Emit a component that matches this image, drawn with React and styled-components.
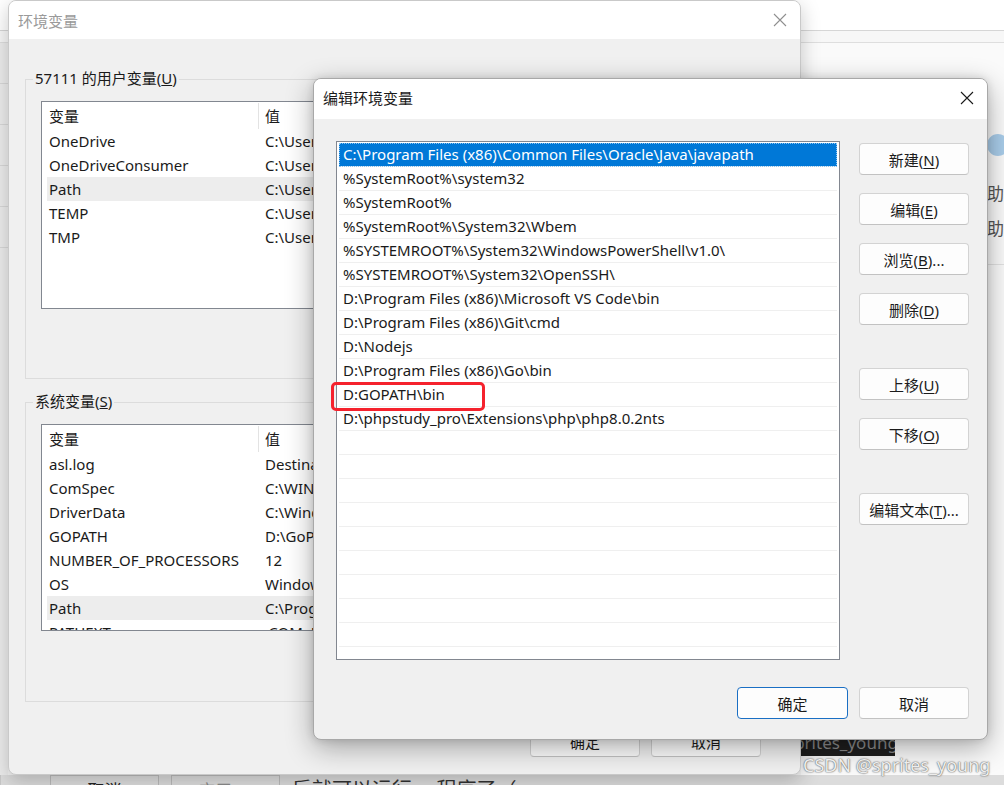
import React from "react";
import styled, { createGlobalStyle } from "styled-components";

const GlobalStyle = createGlobalStyle`
  body {
    margin: 0;
    background: #ededed;
    font-family: "Noto Sans", "Noto Sans CJK SC", sans-serif;
    color: #1a1a1a;
  }
`;

const Desktop = styled.div`
  position: relative;
  width: 1004px;
  height: 785px;
  overflow: hidden;
  background: #f2f2f2;
  display: flex;
  flex-direction: column;
`;

/* ---- page behind the dialogs ---- */

const PageTop = styled.div`
  height: 30px;
  background: #fff;
  border-bottom: 1px solid #d6d6d6;
`;

const PageSub = styled.div`
  height: 11px;
  background: #f7f7f7;
  border-bottom: 1px solid #dedede;
`;

const PageMiddle = styled.div`
  flex: 1;
  display: flex;
`;

const LeftStrip = styled.div`
  width: 8px;
  background: #ececec;
  display: flex;
  flex-direction: column;
  div {
    height: 40px;
    border-bottom: 1px solid #d8d8d8;
  }
`;

const Spacer = styled.div`
  flex: 1;
`;

const RightArea = styled.div`
  width: 203px;
  display: flex;
  flex-direction: column;
  background: #fafafa;
`;

const SideInfo = styled.div`
  padding: 91px 0 24px 186px;
  display: flex;
  flex-direction: column;
  gap: 10px;
  font-size: 17px;
  color: #555;
  border-bottom: 1px solid #e2e2e2;
`;

const SideIcon = styled.div`
  width: 22px;
  height: 22px;
  border-radius: 50%;
  background: #a9cdea;
  margin-bottom: 14px;
`;

const DarkTag = styled.div`
  margin-top: auto;
  margin-bottom: 19px;
  width: 94px;
  height: 16px;
  background: #1e1e1e;
  color: #8a8a8a;
  font-size: 17px;
  line-height: 6px;
  overflow: hidden;
  white-space: nowrap;
  text-indent: -15px;
`;

const PageBottom = styled.div`
  height: 10px;
  display: flex;
  align-items: flex-start;
  padding-left: 49px;
  gap: 12px;
  background: #dcdcdc;
  border-left: 1px solid #c8c8c8;
`;

const PageButton = styled.div`
  width: 109px;
  height: 30px;
  box-sizing: border-box;
  border: 1px solid #bcbcbc;
  background: #dedede;
  text-align: center;
  font-size: 17px;
  line-height: 30px;
  color: ${p => (p.$muted ? "#8c8c8c" : "#222")};
`;

const PageText = styled.div`
  font-size: 20px;
  line-height: 30px;
  color: #333;
  white-space: nowrap;
`;

/* ---- windows ---- */

const Window = styled.section`
  position: absolute;
  left: ${p => p.$x}px;
  top: ${p => p.$y}px;
  width: ${p => p.$w}px;
  height: ${p => p.$h}px;
  box-sizing: border-box;
  display: flex;
  flex-direction: column;
  background: #f0f0f0;
  border: 1px solid ${p => (p.$active ? "#a8a8a8" : "#c9c9c9")};
  border-radius: 8px;
  box-shadow: ${p =>
    p.$active
      ? "0 8px 28px rgba(0,0,0,0.32), 0 0 8px rgba(0,0,0,0.12)"
      : "0 6px 20px rgba(0,0,0,0.22)"};
  overflow: hidden;
`;

const TitleBar = styled.header`
  height: ${p => p.$h}px;
  box-sizing: border-box;
  flex-shrink: 0;
  background: #fff;
  display: flex;
  align-items: center;
  justify-content: space-between;
  padding: 0 13px ${p => p.$lift || 0}px ${p => p.$pad}px;
  font-size: 15px;
  color: ${p => (p.$active ? "#1a1a1a" : "#9a9a9a")};
`;

const CloseIcon = ({ color }) => (
  <svg width="14" height="14" viewBox="0 0 14 14">
    <path d="M1 1 L13 13 M13 1 L1 13" stroke={color} strokeWidth="1.1" fill="none" />
  </svg>
);

const BackBody = styled.div`
  flex: 1;
  display: flex;
  flex-direction: column;
  padding: 40px 16px 0 16px;
  gap: 23px;
`;

const GroupBox = styled.div`
  position: relative;
  height: 300px;
  box-sizing: border-box;
  border: 1px solid #dcdcdc;
  padding: 21px 15px 0 15px;
`;

const GroupLabel = styled.span`
  position: absolute;
  top: -12px;
  left: 7px;
  padding: 0 2px;
  background: #f0f0f0;
  font-size: 15px;
  line-height: 20px;
  color: #1a1a1a;
`;

const VarList = styled.div`
  height: ${p => p.$h}px;
  box-sizing: border-box;
  background: #fff;
  border: 1px solid #828790;
  padding: 1px 0 0 5px;
  overflow: hidden;
  font-size: 15px;
`;

const VarRow = styled.div`
  display: flex;
  height: ${p => (p.$head ? 26 : 24)}px;
  line-height: ${p => (p.$head ? 26 : 24)}px;
  background: ${p => (p.$hl ? "#ededed" : "transparent")};
  white-space: nowrap;
`;

const NameCell = styled.div`
  width: 212px;
  flex-shrink: 0;
  box-sizing: border-box;
  padding-left: 2px;
  border-right: 1px solid ${p => (p.$head ? "#e3e3e3" : "transparent")};
`;

/* the value column runs on under the front dialog; clip it at its edge */
const ValueCell = styled.div`
  padding-left: 6px;
  width: 52px;
  overflow: hidden;
`;

const BackButtons = styled.div`
  display: flex;
  justify-content: flex-end;
  gap: 11px;
  padding-right: 23px;
`;

const Button = styled.button`
  width: ${p => p.$w || 110}px;
  height: 32px;
  box-sizing: border-box;
  border: 1px solid ${p => (p.$primary ? "#1a6fc4" : "#d3d3d3")};
  border-bottom-color: ${p => (p.$primary ? "#1a6fc4" : "#c2c2c2")};
  border-radius: 4px;
  background: #fdfdfd;
  font-family: inherit;
  font-size: 15px;
  color: #1b1b1b;
  padding: 0;
  margin-top: ${p => p.$mt || 0}px;
  flex-shrink: 0;
  u {
    text-underline-offset: 2px;
  }
`;

const FrontBody = styled.div`
  flex: 1;
  display: flex;
  flex-direction: column;
  padding: 22px 18px 0 22px;
`;

const EditRow = styled.div`
  display: flex;
  gap: 19px;
`;

const PathList = styled.div`
  width: 504px;
  height: 519px;
  box-sizing: border-box;
  background: #fff;
  border: 1px solid #828790;
  padding: 1px 2px;
  overflow: hidden;
  font-size: 15px;
`;

const PathRow = styled.div`
  height: 23px;
  line-height: 23px;
  border-bottom: 1px solid #efefef;
  padding-left: 4px;
  white-space: nowrap;
  background: ${p => (p.$selected ? "#0078d7" : "transparent")};
  color: ${p => (p.$selected ? "#fff" : "#1a1a1a")};
  outline: ${p => (p.$selected ? "1px dotted #8cc4f0" : "none")};
  outline-offset: -1px;
`;

const SideButtons = styled.div`
  display: flex;
  flex-direction: column;
  gap: 18px;
  padding-top: 2px;
`;

const FooterButtons = styled.div`
  display: flex;
  justify-content: flex-end;
  gap: 11px;
  margin-top: 27px;
`;

const Highlight = styled.div`
  position: absolute;
  left: 17px;
  top: 303px;
  width: 154px;
  height: 29px;
  box-sizing: border-box;
  border: 3px solid #f5222d;
  border-radius: 5px;
`;

const Watermark = styled.div`
  position: absolute;
  left: 803px;
  top: 753px;
  font-family: "Noto Sans", "Noto Sans CJK SC", sans-serif;
  font-size: 18px;
  color: #ededed;
  text-shadow: 0 0 1px #555, 0 0 2px rgba(0, 0, 0, 0.5);
  white-space: nowrap;
`;

const userVars = [
  ["OneDrive", "C:\\Users\\57111\\OneDrive"],
  ["OneDriveConsumer", "C:\\Users\\57111\\OneDrive"],
  ["Path", "C:\\Users\\57111\\AppData\\Local\\Microsoft\\WindowsApps"],
  ["TEMP", "C:\\Users\\57111\\AppData\\Local\\Temp"],
  ["TMP", "C:\\Users\\57111\\AppData\\Local\\Temp"],
];

const systemVars = [
  ["asl.log", "Destination=file"],
  ["ComSpec", "C:\\WINDOWS\\system32\\cmd.exe"],
  ["DriverData", "C:\\Windows\\System32\\Drivers\\DriverData"],
  ["GOPATH", "D:\\GoPath"],
  ["NUMBER_OF_PROCESSORS", "12"],
  ["OS", "Windows_NT"],
  ["Path", "C:\\Program Files (x86)\\Common Files\\Oracle\\Java\\javapath"],
  ["PATHEXT", ".COM;.EXE;.BAT;.CMD;.VBS;.VBE;.JS"],
];

const paths = [
  "C:\\Program Files (x86)\\Common Files\\Oracle\\Java\\javapath",
  "%SystemRoot%\\system32",
  "%SystemRoot%",
  "%SystemRoot%\\System32\\Wbem",
  "%SYSTEMROOT%\\System32\\WindowsPowerShell\\v1.0\\",
  "%SYSTEMROOT%\\System32\\OpenSSH\\",
  "D:\\Program Files (x86)\\Microsoft VS Code\\bin",
  "D:\\Program Files (x86)\\Git\\cmd",
  "D:\\Nodejs",
  "D:\\Program Files (x86)\\Go\\bin",
  "D:GOPATH\\bin",
  "D:\\phpstudy_pro\\Extensions\\php\\php8.0.2nts",
];

const rows = [...paths, ...Array(11).fill("")];

function VarTable({ height, items, highlight }) {
  return (
    <VarList $h={height}>
      <VarRow $head>
        <NameCell $head>变量</NameCell>
        <ValueCell>值</ValueCell>
      </VarRow>
      {items.map(([name, value]) => (
        <VarRow key={name} $hl={name === highlight}>
          <NameCell>{name}</NameCell>
          <ValueCell>{value}</ValueCell>
        </VarRow>
      ))}
    </VarList>
  );
}

export default function App() {
  return (
    <>
      <GlobalStyle />
      <Desktop>
        <PageTop />
        <PageSub />
        <PageMiddle>
          <LeftStrip>
            <div />
            <div />
            <div />
            <div />
            <div />
          </LeftStrip>
          <Spacer />
          <RightArea>
            <SideInfo>
              <SideIcon />
              <span>助</span>
              <span>助</span>
            </SideInfo>
            <DarkTag>sprites_young</DarkTag>
          </RightArea>
        </PageMiddle>
        <PageBottom>
          <PageButton>取消</PageButton>
          <PageButton $muted>应用(A)</PageButton>
          <PageText>后就可以运行go程序了（</PageText>
        </PageBottom>

        <Window $x={8} $y={0} $w={793} $h={775}>
          <TitleBar $h={38} $pad={9}>
            <span>环境变量</span>
            <CloseIcon color="#8f8f8f" />
          </TitleBar>
          <BackBody>
            <GroupBox>
              <GroupLabel>
                57111 的用户变量(<u>U</u>)
              </GroupLabel>
              <VarTable height={208} items={userVars} highlight="Path" />
            </GroupBox>
            <GroupBox>
              <GroupLabel>
                系统变量(<u>S</u>)
              </GroupLabel>
              <VarTable height={207} items={systemVars} highlight="Path" />
            </GroupBox>
            <BackButtons>
              <Button $w={110}>确定</Button>
              <Button $w={110}>取消</Button>
            </BackButtons>
          </BackBody>
        </Window>

        <Window $x={313} $y={78} $w={675} $h={662} $active>
          <TitleBar $h={40} $pad={9} $lift={3} $active>
            <span>编辑环境变量</span>
            <CloseIcon color="#1a1a1a" />
          </TitleBar>
          <FrontBody>
            <EditRow>
              <PathList>
                {rows.map((p, i) => (
                  <PathRow key={i} $selected={i === 0}>
                    {p}
                  </PathRow>
                ))}
              </PathList>
              <SideButtons>
                <Button>
                  新建(<u>N</u>)
                </Button>
                <Button>
                  编辑(<u>E</u>)
                </Button>
                <Button>
                  浏览(<u>B</u>)...
                </Button>
                <Button>
                  删除(<u>D</u>)
                </Button>
                <Button $mt={25}>
                  上移(<u>U</u>)
                </Button>
                <Button>
                  下移(<u>O</u>)
                </Button>
                <Button $mt={25}>
                  编辑文本(<u>T</u>)...
                </Button>
              </SideButtons>
            </EditRow>
            <FooterButtons>
              <Button $w={111} $primary>
                确定
              </Button>
              <Button>取消</Button>
            </FooterButtons>
          </FrontBody>
          <Highlight />
        </Window>

        <Watermark>CSDN @sprites_young</Watermark>
      </Desktop>
    </>
  );
}
